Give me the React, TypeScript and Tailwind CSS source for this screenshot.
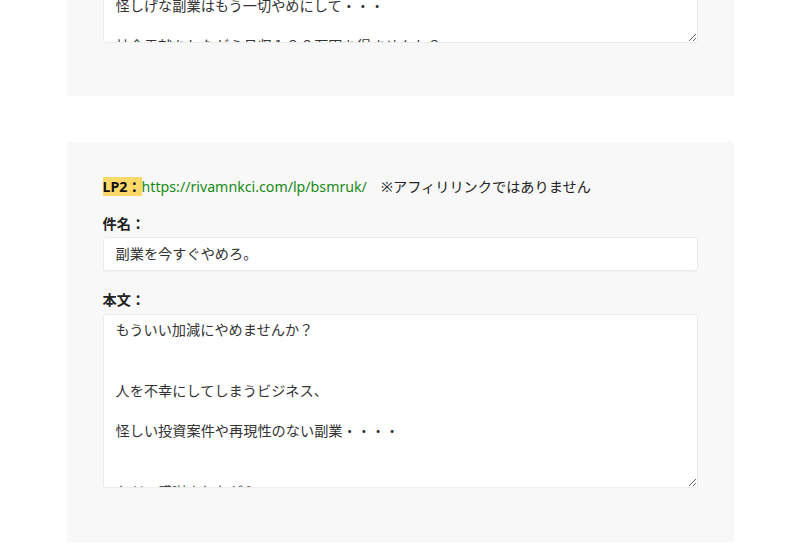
import React from 'react';

const font = { fontFamily: '"Noto Sans", "Noto Sans CJK JP", sans-serif' };

const firstBody = [
  'ただ、感謝されながら',
  '',
  '本当に価値のあるビジネスをしませんか？',
  '',
  '誰かを騙すようなことはせず、',
  '',
  '怪しげな副業はもう一切やめにして・・・',
  '',
  '社会貢献をしながら月収１００万円を得ませんか？',
].join('\n');

const secondBody = [
  'もういい加減にやめませんか？',
  '',
  '',
  '人を不幸にしてしまうビジネス、',
  '',
  '怪しい投資案件や再現性のない副業・・・・',
  '',
  '',
  'ただ、感謝されながら',
].join('\n');

export default function App() {
  return (
    <div className="min-h-[551px] bg-white overflow-hidden text-[#222]" style={font}>
      {/* Previous LP panel (scrolled off the top) */}
      <div className="mx-auto -mt-[160px] w-[667px] bg-[#f8f8f8] px-9 pt-[28px] pb-[53px]">
        <textarea
          readOnly
          spellCheck={false}
          defaultValue={firstBody}
          className="block h-[175px] w-full resize-y overflow-hidden rounded-[3px] border border-[#ececec] bg-white px-3 py-[5px] text-[14.2px] leading-[20.3px] text-[#333] outline-none"
          style={font}
        />
      </div>

      {/* LP2 panel */}
      <div className="mx-auto mt-[46px] w-[667px] bg-[#f8f8f8] px-9 pt-[34px] pb-[54px]">
        <p className="mb-[15px] text-[14.2px] leading-[22px] text-[#222]">
          <span className="bg-[#fdd86a] font-bold text-[#111]">LP2：</span>
          <span className="text-[#178a17]">https://rivamnkci.com/lp/bsmruk/</span>
          <span>　※アフィリリンクではありません</span>
        </p>

        <label className="block mb-[2px] text-[14.2px] font-bold leading-[22px] text-[#222]">件名：</label>
        <div className="flex h-[34px] items-center rounded-[3px] border border-[#ececec] bg-white px-3 text-[14.2px] text-[#333] shadow-[0_1px_1px_rgba(0,0,0,0.03)]">
          副業を今すぐやめろ。
        </div>

        <label className="mt-[18px] mb-[3px] block text-[14.2px] font-bold leading-[22px] text-[#222]">本文：</label>
        <textarea
          readOnly
          spellCheck={false}
          defaultValue={secondBody}
          className="block h-[174px] w-full resize-y overflow-hidden rounded-[3px] border border-[#ececec] bg-white px-3 py-[5px] text-[14.2px] leading-[20.3px] text-[#333] outline-none"
          style={font}
        />
      </div>
    </div>
  );
}
